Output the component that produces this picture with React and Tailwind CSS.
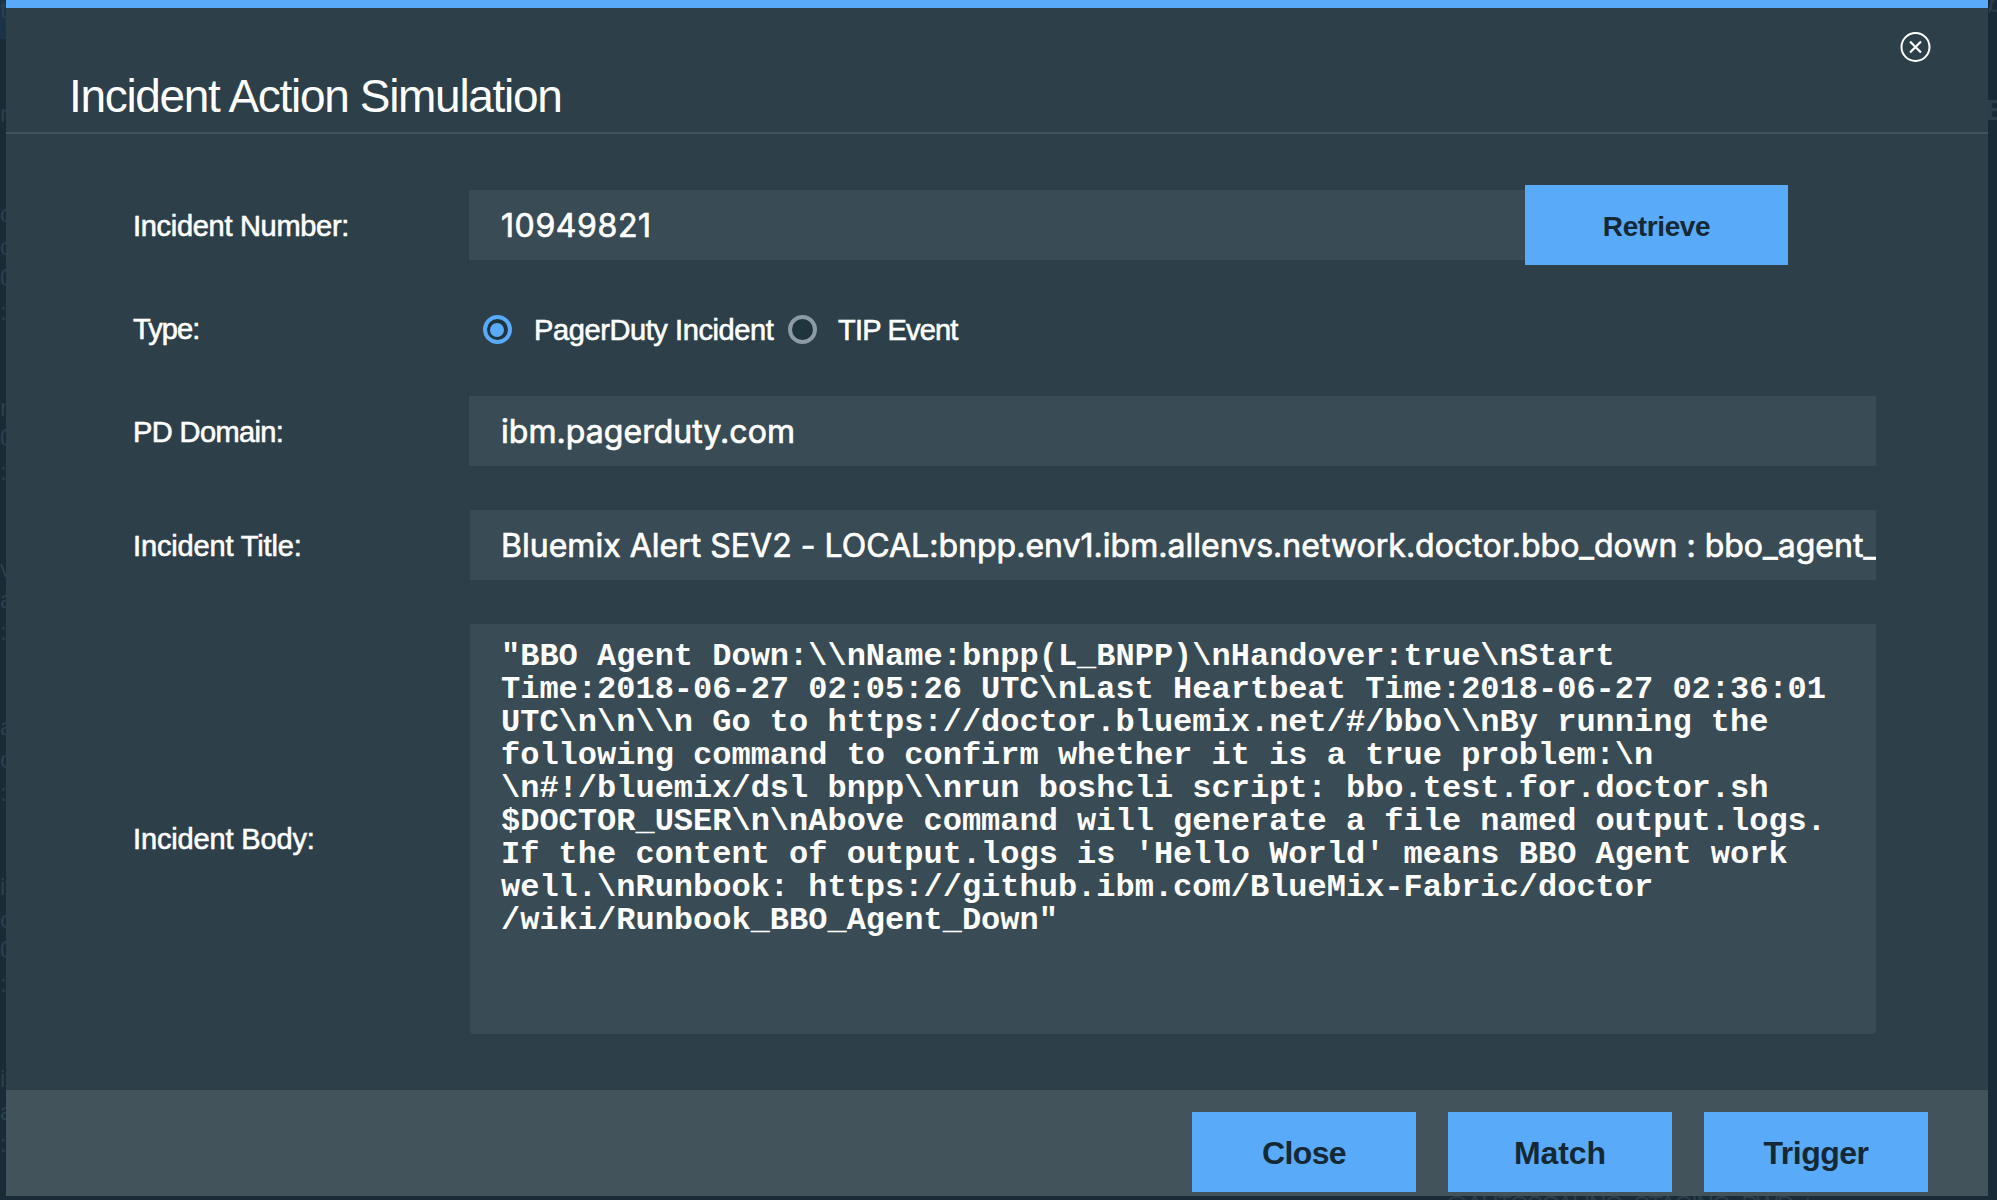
const bodyLines = [
  '"BBO Agent Down:\\\\nName:bnpp(L_BNPP)\\nHandover:true\\nStart',
  'Time:2018-06-27 02:05:26 UTC\\nLast Heartbeat Time:2018-06-27 02:36:01',
  'UTC\\n\\n\\\\n Go to https://doctor.bluemix.net/#/bbo\\\\nBy running the',
  'following command to confirm whether it is a true problem:\\n',
  '\\n#!/bluemix/dsl bnpp\\\\nrun boshcli script: bbo.test.for.doctor.sh',
  '$DOCTOR_USER\\n\\nAbove command will generate a file named output.logs.',
  "If the content of output.logs is 'Hello World' means BBO Agent work",
  'well.\\nRunbook: https://github.ibm.com/BlueMix-Fabric/doctor',
  '/wiki/Runbook_BBO_Agent_Down"',
];

// Fragments of the page behind the dialog that show past its left edge.
const leftFragments = [
  { text: 't', top: -6 },
  { text: 'r', top: 98 },
  { text: 'c', top: 198 },
  { text: 'c', top: 231 },
  { text: '0', top: 262 },
  { text: ':', top: 296 },
  { text: 'n', top: 392 },
  { text: '0', top: 422 },
  { text: ':', top: 456 },
  { text: 'v', top: 553 },
  { text: 'a', top: 584 },
  { text: ':', top: 616 },
  { text: 'a', top: 711 },
  { text: 'o', top: 744 },
  { text: ':', top: 777 },
  { text: 'i', top: 871 },
  { text: 'c', top: 904 },
  { text: '0', top: 934 },
  { text: ':', top: 968 },
  { text: 'i', top: 1063 },
  { text: 'a', top: 1096 },
  { text: ':', top: 1128 },
];

function Label({ children, className = 'pt-0.5 tracking-[-0.3px]' }) {
  return (
    <div
      className={`w-[463px] shrink-0 pl-[127px] text-[29px] leading-8 whitespace-nowrap [-webkit-text-stroke:0.6px_white] ${className}`}
    >
      {children}
    </div>
  );
}

function Field({ children, className }) {
  return (
    <div
      className={`flex h-[70px] items-center overflow-hidden bg-[#394b54] pt-0.5 whitespace-pre font-['Inter',sans-serif] text-[32px] [-webkit-text-stroke:0.7px_white] ${className}`}
    >
      {children}
    </div>
  );
}

function Radio({ checked }) {
  return (
    <span
      className={`flex size-[29px] shrink-0 items-center justify-center rounded-full border-4 bg-[#20343e] ${
        checked ? 'border-[#5aaafa]' : 'border-[#8c9ba5]'
      }`}
    >
      {checked && <span className="mt-0.5 mr-px size-3.5 rounded-full bg-[#5aaafa]" />}
    </span>
  );
}

function FooterButton({ children, className }) {
  return (
    <button
      className={`h-20 w-56 bg-[#5aaafa] pt-0.5 text-[32px] font-bold text-[#152934] ${className}`}
    >
      {children}
    </button>
  );
}

export default function App() {
  return (
    <div className="relative h-[1200px] w-[1997px] overflow-hidden bg-[#192b36] font-['Liberation_Sans',Arial,sans-serif] text-white">
      <div className="absolute inset-y-0 left-0 w-1.5 overflow-hidden text-[24px] leading-8 text-[#2c404c]">
        <div className="h-[39px] bg-[#1a3349]" />
        {leftFragments.map((f, i) => (
          <span key={i} className="absolute left-0" style={{ top: f.top }}>
            {f.text}
          </span>
        ))}
      </div>
      <div className="absolute inset-y-0 right-0 w-[9px] overflow-hidden text-[#2c3e49]">
        <span className="absolute -top-4 left-0 text-[26px] italic">b</span>
        <span className="absolute top-[94px] -left-0.5 text-[29px] leading-8 font-bold">En</span>
      </div>
      <span className="absolute top-[1189px] left-[1444px] text-[24px] leading-8 tracking-[-1.5px] text-[#2c3e49]">
        @AUTOSCALING_STAGING_PWD_t
      </span>

      <section className="relative ml-1.5 flex h-[1196px] w-[1982px] flex-col border-t-8 border-[#5aaafa] bg-[#2d3f49]">
        <header className="flex h-[126px] shrink-0 justify-between border-b-2 border-[#42535c] pr-[57px] pl-[63px]">
          <h1 className="mt-[62px] text-[46px] leading-[52px] tracking-[-1.32px]">
            Incident Action Simulation
          </h1>
          <svg className="mt-6 size-[31px]" viewBox="0 0 31 31" fill="none" stroke="white">
            <circle cx="15.5" cy="15" r="14" strokeWidth="2" />
            <path d="M10 9.5l11 11M21 9.5l-11 11" strokeWidth="2.2" />
          </svg>
        </header>

        <main className="flex flex-1 flex-col pt-[51px]">
          <div className="flex h-20 items-center">
            <Label>Incident Number:</Label>
            <Field className="w-[1056px] pl-8 tracking-[0.6px]">10949821</Field>
            <button className="h-20 w-[263px] bg-[#5aaafa] pt-[3px] text-[28px] font-bold tracking-[-0.4px] text-[#152934]">
              Retrieve
            </button>
          </div>

          <div className="mt-12 flex h-8 items-center">
            <Label className="tracking-[-0.9px]">Type:</Label>
            <div className="flex items-center pl-[14px] text-[29px] leading-8 whitespace-nowrap [-webkit-text-stroke:0.6px_white]">
              <Radio checked />
              <span className="ml-[22px] w-[254px] pt-0.5 tracking-[-0.4px]">
                PagerDuty Incident
              </span>
              <Radio />
              <span className="ml-[21px] pt-0.5 tracking-[-0.8px]">TIP Event</span>
            </div>
          </div>

          <div className="mt-[51px] flex items-center">
            <Label className="pt-0.5 tracking-[-0.6px]">PD Domain:</Label>
            <Field className="w-[1407px] pl-8 tracking-[0.05px]">ibm.pagerduty.com</Field>
          </div>

          <div className="mt-11 flex items-center">
            <Label className="pt-0.5 tracking-[-0.15px]">Incident Title:</Label>
            <Field className="ml-px w-[1406px] pl-[31px] tracking-[0.02px]">
              Bluemix Alert SEV2 - LOCAL:bnpp.env1.ibm.allenvs.network.doctor.bbo_down : bbo_agent_
            </Field>
          </div>

          <div className="mt-11 flex items-center">
            <Label className="pt-5 tracking-[-0.15px]">Incident Body:</Label>
            <div className="ml-px h-[410px] w-[1406px] rounded-b-sm bg-[#394b54] pt-4 pl-[31px] font-['Liberation_Mono',monospace] text-[32px] leading-[33px] font-bold whitespace-pre">
              {bodyLines.map((line) => (
                <div key={line}>{line}</div>
              ))}
            </div>
          </div>
        </main>

        <footer className="flex h-[106px] shrink-0 justify-end gap-8 bg-[#42535c] pt-[22px] pr-[60px]">
          <FooterButton className="tracking-[-0.6px]">Close</FooterButton>
          <FooterButton className="tracking-[-0.1px]">Match</FooterButton>
          <FooterButton className="tracking-[-0.5px]">Trigger</FooterButton>
        </footer>
      </section>
    </div>
  );
}
